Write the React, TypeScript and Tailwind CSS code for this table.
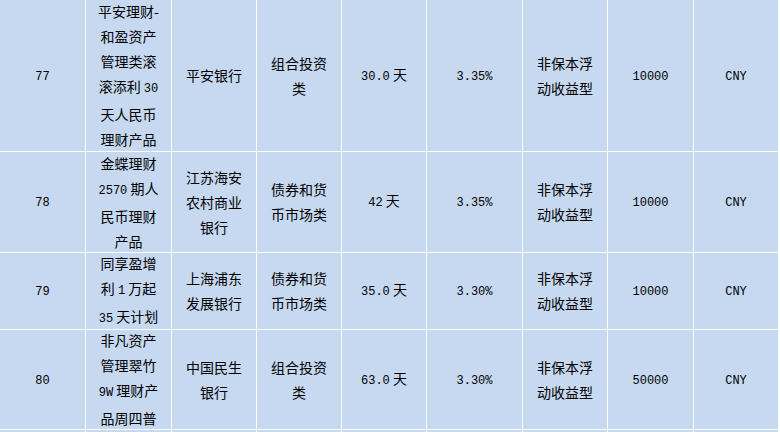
import React from 'react';

type Row = {
  no: string;
  name: string[];
  bank: string[];
  kind: string[];
  term: string;
  rate: string;
  type: string[];
  min: string;
  cur: string;
};

const ROWS: Row[] = [
  {
    no: '77',
    name: ['平安理财-', '和盈资产', '管理类滚', '滚添利 30', '天人民币', '理财产品'],
    bank: ['平安银行'],
    kind: ['组合投资', '类'],
    term: '30.0 天',
    rate: '3.35%',
    type: ['非保本浮', '动收益型'],
    min: '10000',
    cur: 'CNY',
  },
  {
    no: '78',
    name: ['金蝶理财', '2570 期人', '民币理财', '产品'],
    bank: ['江苏海安', '农村商业', '银行'],
    kind: ['债券和货', '币市场类'],
    term: '42 天',
    rate: '3.35%',
    type: ['非保本浮', '动收益型'],
    min: '10000',
    cur: 'CNY',
  },
  {
    no: '79',
    name: ['同享盈增', '利 1 万起', '35 天计划'],
    bank: ['上海浦东', '发展银行'],
    kind: ['债券和货', '币市场类'],
    term: '35.0 天',
    rate: '3.30%',
    type: ['非保本浮', '动收益型'],
    min: '10000',
    cur: 'CNY',
  },
  {
    no: '80',
    name: ['非凡资产', '管理翠竹', '9W 理财产', '品周四普'],
    bank: ['中国民生', '银行'],
    kind: ['组合投资', '类'],
    term: '63.0 天',
    rate: '3.30%',
    type: ['非保本浮', '动收益型'],
    min: '50000',
    cur: 'CNY',
  },
];

// latin runs are set in a narrow mono face, like the half-width glyphs in the shot
function Mixed({ text }: { text: string }) {
  const parts = text.split(/([A-Za-z0-9.%]+)/).filter(Boolean);
  return (
    <>
      {parts.map((p, i) =>
        /[A-Za-z0-9]/.test(p) ? (
          <span key={i} className="font-['Liberation_Mono',monospace] text-[12px]">
            {p}
          </span>
        ) : (
          <span key={i} className="whitespace-pre">{p}</span>
        ),
      )}
    </>
  );
}

function Cell({ lines }: { lines: string[] }) {
  return (
    <div className="flex flex-col items-center justify-center bg-[#c6d9f1] text-center">
      {lines.map((l, i) => (
        <div key={i} className="whitespace-nowrap">
          <Mixed text={l} />
        </div>
      ))}
    </div>
  );
}

export default function App() {
  return (
    <div className="h-[432px] w-[780px] overflow-hidden bg-white">
      <div className="grid w-[778px] grid-cols-[85px_85px_84px_84px_84px_95px_84px_85px_84px] grid-rows-[151px_100px_76px_99px_100px] gap-px bg-white font-['Noto_Sans_CJK_SC',sans-serif] text-[14px] leading-[25px] text-black">
        {ROWS.map((r) => (
          <React.Fragment key={r.no}>
            <Cell lines={[r.no]} />
            <Cell lines={r.name} />
            <Cell lines={r.bank} />
            <Cell lines={r.kind} />
            <Cell lines={[r.term]} />
            <Cell lines={[r.rate]} />
            <Cell lines={r.type} />
            <Cell lines={[r.min]} />
            <Cell lines={[r.cur]} />
          </React.Fragment>
        ))}
        {Array.from({ length: 9 }).map((_, i) => (
          <div key={`tail-${i}`} className="bg-[#c6d9f1]" />
        ))}
      </div>
    </div>
  );
}
